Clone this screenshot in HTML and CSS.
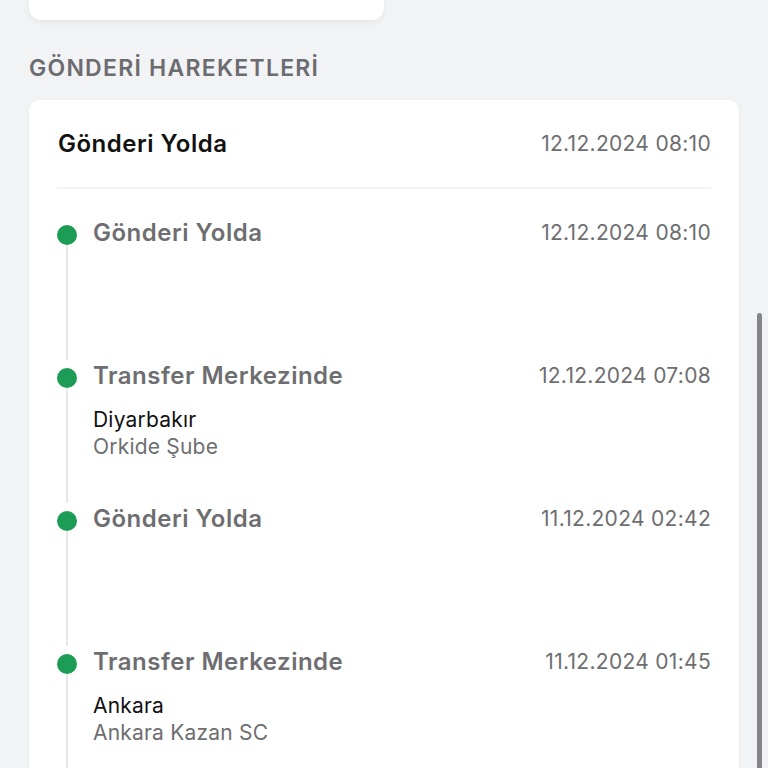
FILE: index.html
```html
<!DOCTYPE html>
<html lang="tr">
<head>
    <meta charset="UTF-8">
    <meta name="viewport" content="width=device-width, initial-scale=1.0">
    <title>Gönderi Hareketleri</title>
    <link rel="stylesheet" href="styles.css">
</head>
<body>
    <div class="page">
        <div class="top-card"></div>

        <h2 class="section-title">GÖNDERİ HAREKETLERİ</h2>

        <div class="card">
            <div class="card-header">
                <span class="status">Gönderi Yolda</span>
                <span class="date">12.12.2024 08:10</span>
            </div>

            <div class="timeline">
                <div class="event">
                    <div class="rail"><span class="dot"></span><span class="line"></span></div>
                    <div class="event-body">
                        <div class="event-head">
                            <span class="event-title">Gönderi Yolda</span>
                            <span class="date">12.12.2024 08:10</span>
                        </div>
                    </div>
                </div>
                <div class="event">
                    <div class="rail"><span class="dot"></span><span class="line"></span></div>
                    <div class="event-body">
                        <div class="event-head">
                            <span class="event-title">Transfer Merkezinde</span>
                            <span class="date">12.12.2024 07:08</span>
                        </div>
                        <div class="city">Diyarbakır</div>
                        <div class="branch">Orkide Şube</div>
                    </div>
                </div>
                <div class="event">
                    <div class="rail"><span class="dot"></span><span class="line"></span></div>
                    <div class="event-body">
                        <div class="event-head">
                            <span class="event-title">Gönderi Yolda</span>
                            <span class="date">11.12.2024 02:42</span>
                        </div>
                    </div>
                </div>
                <div class="event">
                    <div class="rail"><span class="dot"></span><span class="line"></span></div>
                    <div class="event-body">
                        <div class="event-head">
                            <span class="event-title">Transfer Merkezinde</span>
                            <span class="date">11.12.2024 01:45</span>
                        </div>
                        <div class="city">Ankara</div>
                        <div class="branch">Ankara Kazan SC</div>
                    </div>
                </div>
            </div>
        </div>
    </div>
    <div class="scrollbar"></div>
</body>
</html>
```

FILE: styles.css
```css
body {
    margin: 0;
    font-family: 'Inter', 'Noto Sans', sans-serif;
    background: #f2f3f5;
    overflow: hidden;
    height: 768px;
}
.page {
    padding: 0 29px;
}
.top-card {
    width: 355px;
    height: 20px;
    background: #fff;
    border-radius: 0 0 12px 12px;
    box-shadow: 0 2px 6px rgba(0, 0, 0, 0.06);
}
.section-title {
    margin: 33px 0 17px;
    font-size: 23px;
    font-weight: 600;
    color: #6c6c70;
    line-height: 30px;
    letter-spacing: 1.25px;
}
.card {
    background: #fff;
    border-radius: 10px;
    padding: 0 28px;
    box-shadow: 0 1px 4px rgba(0, 0, 0, 0.04);
}
.card-header {
    display: flex;
    justify-content: space-between;
    align-items: center;
    height: 87px;
    border-bottom: 2px solid #f3f3f4;
    padding-left: 1px;
}
.status {
    font-size: 24px;
    font-weight: 600;
    color: #111;
    letter-spacing: 0.5px;
}
.date {
    font-size: 21px;
    color: #6e6e71;
    letter-spacing: 0.3px;
}
.timeline {
    padding-top: 28px;
}
.event {
    display: grid;
    grid-template-columns: 20px 1fr;
    column-gap: 16px;
    min-height: 143px;
}
.rail {
    display: flex;
    flex-direction: column;
    align-items: center;
    padding-top: 8px;
}
.dot {
    width: 20px;
    height: 20px;
    border-radius: 50%;
    background: #1c9c55;
    flex-shrink: 0;
}
.line {
    width: 2px;
    flex: 1;
    background: #e8e8ea;
}
.event-head {
    display: flex;
    justify-content: space-between;
    align-items: center;
    height: 30px;
}
.event-title {
    font-size: 24px;
    font-weight: 600;
    color: #6e6e71;
    letter-spacing: 0.5px;
}
.city {
    margin-top: 16px;
    font-size: 21px;
    color: #111;
    line-height: 27px;
    letter-spacing: 0.2px;
}
.branch {
    font-size: 21px;
    color: #6e6e71;
    line-height: 27px;
    letter-spacing: 0.2px;
}
.scrollbar {
    position: absolute;
    left: 757px;
    top: 313px;
    width: 5px;
    height: 470px;
    border-radius: 3px;
    background: #858587;
}
```
